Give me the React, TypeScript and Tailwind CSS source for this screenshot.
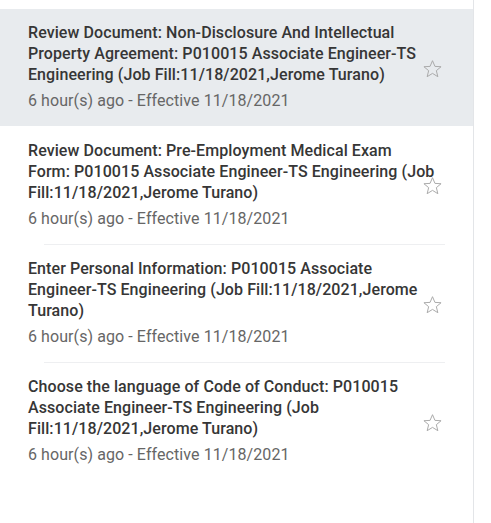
const items = [
  {
    lines: [
      "Review Document: Non-Disclosure And Intellectual",
      "Property Agreement: P010015 Associate Engineer-TS",
      "Engineering (Job Fill:11/18/2021,Jerome Turano)",
    ],
    active: true,
  },
  {
    lines: [
      "Review Document: Pre-Employment Medical Exam",
      "Form: P010015 Associate Engineer-TS Engineering (Job",
      "Fill:11/18/2021,Jerome Turano)",
    ],
  },
  {
    lines: [
      "Enter Personal Information: P010015 Associate",
      "Engineer-TS Engineering (Job Fill:11/18/2021,Jerome",
      "Turano)",
    ],
  },
  {
    lines: [
      "Choose the language of Code of Conduct: P010015",
      "Associate Engineer-TS Engineering (Job",
      "Fill:11/18/2021,Jerome Turano)",
    ],
  },
];

function StarOutline() {
  return (
    <svg width="21" height="21" viewBox="0 0 24 24" fill="none" stroke="#a8a8a8" strokeWidth="1.1" strokeLinejoin="miter">
      <polygon points="12,2.5 14.8,9 21.8,9.4 16.4,13.9 18.1,20.8 12,17 5.9,20.8 7.6,13.9 2.2,9.4 9.2,9" />
    </svg>
  );
}

export default function App() {
  return (
    <div className="w-[491px] h-[523px] bg-white font-['Roboto',sans-serif]">
      <div className="w-[474px] h-full border-r border-[#e3e5e8] pt-[9px]">
        {items.map((item, i) => (
          <div key={i}>
            {i > 1 && <div className="ml-[44px] mr-[28px] h-px bg-[#eeeff1]" />}
            <div
              className={`relative pl-[28px] pr-[20px] pb-[15px] ${
                item.active ? "bg-[#e8ebee] pt-[13px]" : i === 1 ? "pt-[14px]" : "pt-[13px]"
              }`}
            >
              <div className="text-[16px] leading-[21px] font-medium tracking-[0.08px] text-[#363636]">
                {item.lines.map((l) => (
                  <div key={l} className="whitespace-nowrap">
                    {l}
                  </div>
                ))}
              </div>
              <div className="mt-[5px] text-[16px] leading-[21px] tracking-[0.08px] text-[#666666]">
                6 hour(s) ago - Effective 11/18/2021
              </div>
              <div className="absolute right-[30px] top-1/2 -translate-y-1/2 mt-[1px]">
                <StarOutline />
              </div>
            </div>
          </div>
        ))}
      </div>
    </div>
  );
}
